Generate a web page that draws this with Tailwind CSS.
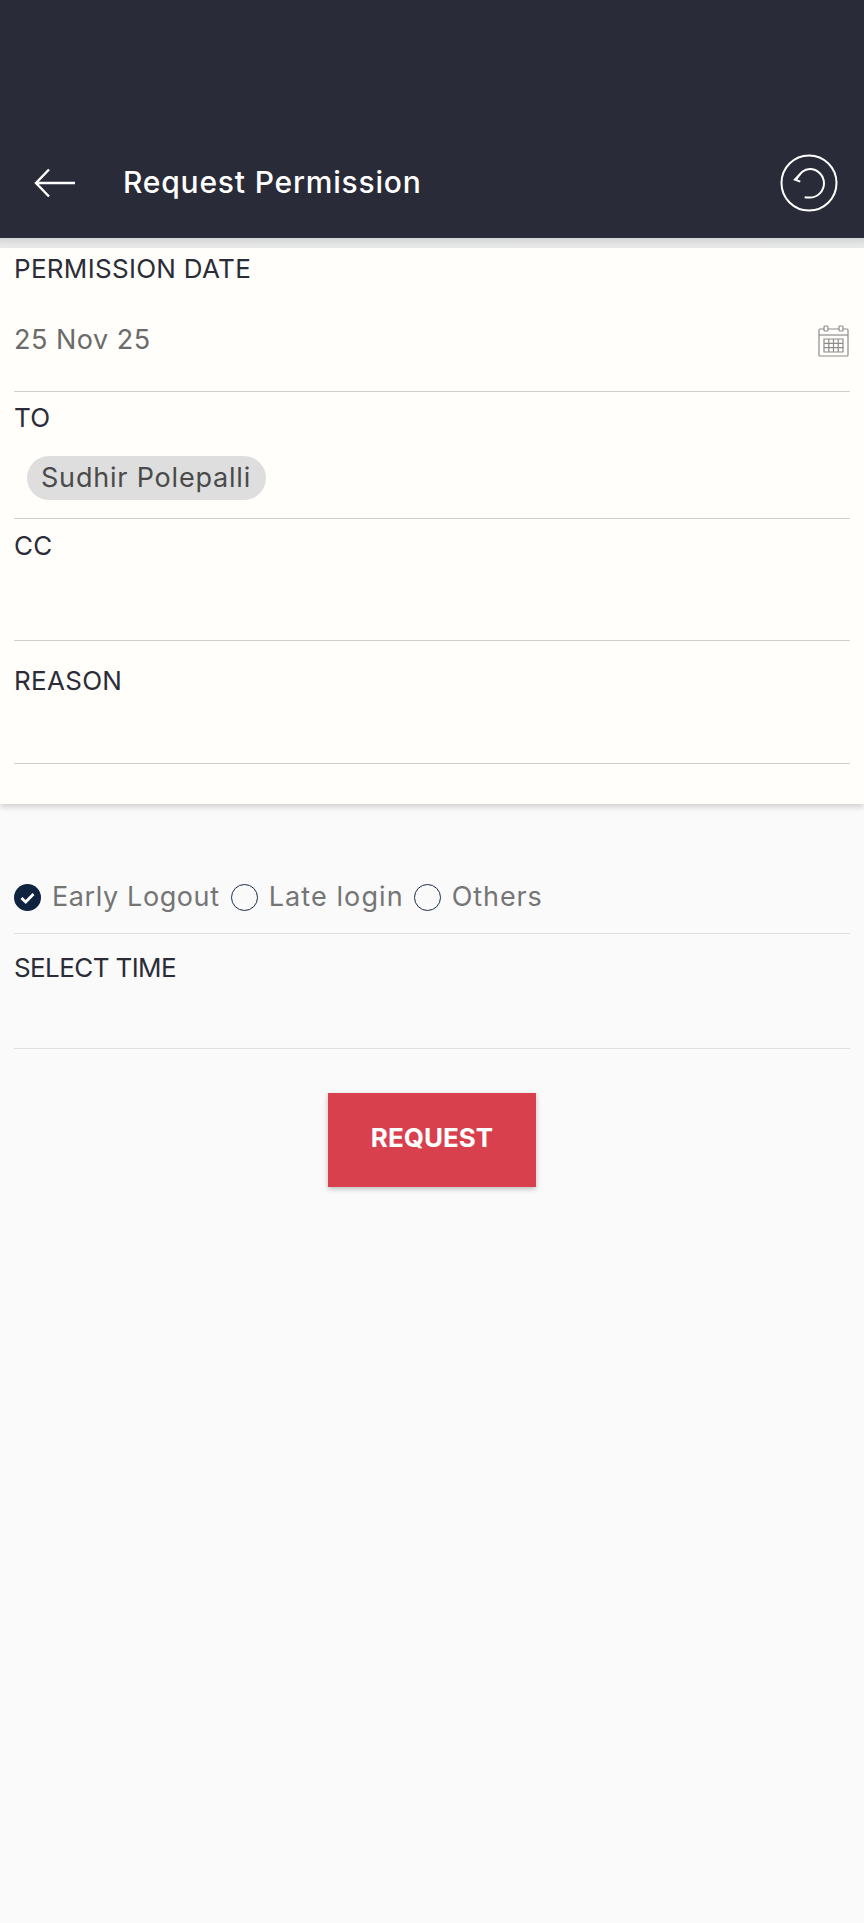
<!DOCTYPE html>
<html><head><meta charset="utf-8">
<script src="https://cdn.jsdelivr.net/npm/@tailwindcss/browser@4"></script>
</head>
<body class="m-0 bg-[#fafafa]">
<div class="w-[864px] h-[1923px] overflow-hidden flex flex-col bg-[#fafafa] font-['Inter',sans-serif]">
  <header class="h-[238px] shrink-0 bg-[#2a2b38] flex items-end pb-[26px] pl-[34px] pr-[26px]">
    <div class="h-[58px] w-full flex items-center">
      <svg width="42" height="30" viewBox="0 0 42 30" fill="none" stroke="#ffffff" stroke-width="2.4" class="shrink-0"><path d="M41 15H2M15 1.500 2 15l13 13.500"/></svg>
      <h1 class="ml-[47px] -mt-[2px] text-[30px] font-medium text-white tracking-[0.8px] leading-none">Request Permission</h1>
      <svg width="58" height="58" viewBox="0 0 58 58" fill="none" stroke="#ffffff" stroke-width="2" class="ml-auto shrink-0">
        <circle cx="29" cy="29" r="27.500"/>
        <path d="M24.700 43.300c1.500 .3 3.500 .3 5 .3a14.300 14.300 0 0 0 0-28.600C24 15 19.500 19.500 16 26"/>
        <path d="M20.300 20 14.700 25.700l5.600 2" stroke-width="1.800"/>
      </svg>
    </div>
  </header>
  <div class="h-[10px] shrink-0 bg-gradient-to-b from-[#d3d4d6] to-[#eeeeee]"></div>
  <section class="h-[556px] shrink-0 bg-[#fffefa] shadow-[0_3px_6px_rgba(0,0,0,0.16)] px-[14px] flex flex-col">
    <div class="h-[144px] border-b border-[#cfcfcf] flex flex-col">
      <label class="mt-[5px] text-[26px] leading-[32px] tracking-[0.3px] text-[#2b2c38]">PERMISSION DATE</label>
      <div class="mt-[37px] flex items-center justify-between">
        <span class="text-[27px] leading-[36px] tracking-[0.5px] text-[#6b6b6b]">25 Nov 25</span>
        <svg width="31" height="32" viewBox="0 0 31 32" fill="none" stroke="#8c8c8c" stroke-width="1.200" class="mr-[1px] mt-[1px]">
          <rect x="1" y="4" width="29" height="27" rx="1"/>
          <path d="M1 10h29"/>
          <rect x="6" y="1" width="4" height="5" rx="1" fill="#fffefa"/>
          <rect x="21" y="1" width="4" height="5" rx="1" fill="#fffefa"/>
          <path d="M6 14h19v13H6zM6 18.300h19M6 22.600h19M10.800 14v13M15.500 14v13M20.200 14v13"/>
        </svg>
      </div>
    </div>
    <div class="h-[127px] border-b border-[#cfcfcf] flex flex-col">
      <label class="mt-[10px] text-[26px] leading-[32px] tracking-[0.3px] text-[#2b2c38]">TO</label>
      <div class="mt-[22px] ml-[13px] self-start h-[44px] rounded-[22px] bg-[#dedede] pl-[14px] pr-[15px] flex items-center text-[27px] text-[#4a4a4a] tracking-[0.8px]">Sudhir Polepalli</div>
    </div>
    <div class="h-[122px] border-b border-[#cfcfcf] flex flex-col">
      <label class="mt-[11px] text-[26px] leading-[32px] tracking-[0.3px] text-[#2b2c38]">CC</label>
    </div>
    <div class="h-[123px] border-b border-[#cfcfcf] flex flex-col">
      <label class="mt-[24px] text-[26px] leading-[32px] tracking-[0.3px] text-[#2b2c38]">REASON</label>
    </div>
  </section>
  <section class="px-[14px] flex flex-col">
    <div class="h-[130px] border-b border-[#dedede] flex items-end pb-[18px] text-[27px] leading-[36px] text-[#757575]">
      <div class="flex items-center h-[36px]">
        <svg width="27" height="27" viewBox="0 0 27 27" class="shrink-0"><circle cx="13.500" cy="13.500" r="13.500" fill="#10233f"/><path d="M7.500 14l4.200 4 7.800-8" fill="none" stroke="#fff" stroke-width="2.800"/></svg>
        <span class="ml-[11px] tracking-[0.6px]">Early Logout</span>
        <span class="ml-[11px] w-[27px] h-[27px] rounded-full border-[1.500px] border-[#1a2a44] shrink-0"></span>
        <span class="ml-[11px] tracking-[1.1px]">Late login</span>
        <span class="ml-[10px] w-[27px] h-[27px] rounded-full border-[1.500px] border-[#1a2a44] shrink-0"></span>
        <span class="ml-[11px] tracking-[0.9px]">Others</span>
      </div>
    </div>
    <div class="h-[115px] border-b border-[#dedede] flex flex-col">
      <label class="mt-[18px] text-[26px] leading-[32px] tracking-[-0.6px] text-[#2b2c38]">SELECT TIME</label>
    </div>
    <button class="mt-[44px] self-center w-[208px] h-[94px] bg-[#d8404e] text-white text-[26px] font-bold pb-[6px] shadow-[0_2px_5px_rgba(0,0,0,0.25)]">REQUEST</button>
  </section>
</div>
</body></html>
